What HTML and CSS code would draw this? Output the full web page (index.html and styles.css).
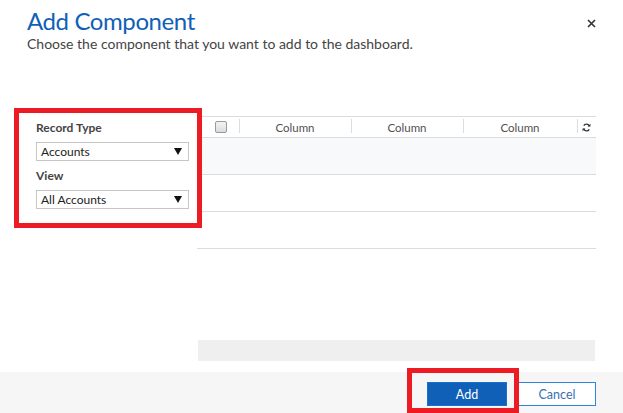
FILE: index.html
```html
<!DOCTYPE html>
<html lang="en">
<head>
<meta charset="utf-8">
<title>Add Component</title>
<link rel="stylesheet" href="styles.css">
</head>
<body>
<div class="dialog">
  <header class="head">
    <div class="titles">
      <h1 class="title">Add Component</h1>
      <p class="subtitle">Choose the component that you want to add to the dashboard.</p>
    </div>
    <button class="close" aria-label="Close">
      <svg width="9" height="9" viewBox="0 0 9 9"><path d="M1 1L8 8M8 1L1 8" stroke="#333" stroke-width="1.6" fill="none"/></svg>
    </button>
  </header>

  <main class="content">
    <section class="filters">
      <div class="label">Record Type</div>
      <div class="select"><span>Accounts</span><svg class="caret" width="8" height="7" viewBox="0 0 8 7"><path d="M0 0H8L4 7Z" fill="#111"/></svg></div>
      <div class="label label-view">View</div>
      <div class="select"><span>All Accounts</span><svg class="caret" width="8" height="7" viewBox="0 0 8 7"><path d="M0 0H8L4 7Z" fill="#111"/></svg></div>
    </section>
    <div class="annot annot-filters"></div>

    <section class="grid">
      <div class="grid-head">
        <div class="cell cell-check"><span class="checkbox"></span></div>
        <div class="cell col">Column</div>
        <div class="cell col">Column</div>
        <div class="cell col col-last">Column</div>
        <div class="cell cell-refresh">
          <svg width="9" height="9" viewBox="0 0 10 10"><path d="M8.2 3.6A3.4 3.4 0 0 0 2 3" stroke="#333" stroke-width="1.6" fill="none"/><path d="M6.2 3.9H9.4V0.7Z" fill="#333"/><path d="M1.8 6.4A3.4 3.4 0 0 0 8 7" stroke="#333" stroke-width="1.6" fill="none"/><path d="M3.8 6.1H0.6V9.3Z" fill="#333"/></svg>
        </div>
      </div>
      <div class="row row-alt"></div>
      <div class="row"></div>
      <div class="row"></div>
      <div class="grid-fill"></div>
      <div class="hscroll"></div>
    </section>
  </main>

  <footer class="foot">
    <button class="btn btn-primary">Add</button>
    <button class="btn btn-secondary">Cancel</button>
    <div class="annot annot-add"></div>
  </footer>
</div>
</body>
</html>
```

FILE: styles.css
```css
* { box-sizing: border-box; }

html, body {
  margin: 0;
  padding: 0;
  background: #fff;
}

body {
  font-family: Lato, "Open Sans", "Liberation Sans", sans-serif;
  color: #444;
}

.dialog {
  width: 623px;
  height: 413px;
  display: flex;
  flex-direction: column;
  overflow: hidden;
}

.head {
  height: 60px;
  display: flex;
  justify-content: space-between;
  align-items: flex-start;
  padding: 0 27px 0 27px;
}

.title {
  margin: 6px 0 0;
  font-size: 24px;
  font-weight: 400;
  line-height: 30px;
  color: #1160b7;
  letter-spacing: -0.4px;
}

.subtitle {
  margin: -1px 0 0;
  font-size: 14px;
  line-height: 17px;
  color: #444;
}

.close {
  margin-top: 19px;
  padding: 0;
  border: 0;
  background: none;
  width: 9px;
  height: 9px;
  display: flex;
}

.content {
  position: relative;
  flex: 1;
  display: flex;
  align-items: flex-start;
  padding: 56px 27px 0 36px;
}

.filters {
  width: 153px;
  display: flex;
  flex-direction: column;
  padding-top: 4px;
}

.label {
  font-size: 12px;
  font-weight: 700;
  line-height: 16px;
  color: #444;
}

.label-view { margin-top: 7px; }

.select {
  margin-top: 6px;
  height: 19px;
  border: 1px solid #c6c6c6;
  display: flex;
  align-items: center;
  justify-content: space-between;
  padding: 0 6px 0 4px;
  font-size: 12px;
  color: #222;
  background: #fff;
}

.caret { display: block; }

.annot {
  position: absolute;
  border: 5px solid #ed1c24;
  pointer-events: none;
}

.annot-filters {
  left: 14px;
  top: 48px;
  width: 188px;
  height: 120px;
}

.grid {
  margin-left: 8px;
  width: 399px;
  display: flex;
  flex-direction: column;
}

.grid-head {
  display: flex;
  height: 22px;
  border-top: 1px solid #dcdcdc;
  border-bottom: 1px solid #dcdcdc;
}

.cell {
  display: flex;
  align-items: center;
  justify-content: center;
  font-size: 11.5px;
  color: #505050;
}

.cell-check {
  width: 42px;
  padding-left: 18px;
  justify-content: flex-start;
}

.checkbox {
  width: 12px;
  height: 12px;
  border: 1px solid #9a9a9a;
  border-radius: 2px;
  background: linear-gradient(#f4f4f4, #dcdcdc);
}

.col {
  width: 112px;
  position: relative;
}

.col::before {
  content: "";
  position: absolute;
  left: 0;
  top: 2px;
  height: 14px;
  border-left: 1px solid #dcdcdc;
}

.col-last { width: 114px; }

.cell-refresh {
  width: 19px;
  position: relative;
  padding-left: 5px;
  justify-content: flex-start;
}

.cell-refresh::before {
  content: "";
  position: absolute;
  left: 0;
  top: 2px;
  height: 14px;
  border-left: 1px solid #dcdcdc;
}

.row {
  height: 37px;
  border-bottom: 1px solid #dcdcdc;
}

.row-alt { background: #f8f9fa; }

.grid-fill { height: 91px; }

.hscroll {
  height: 21px;
  margin: 0 1px;
  background: #efefef;
}

.foot {
  position: relative;
  height: 41px;
  flex: none;
  background: #f6f6f6;
  display: flex;
  justify-content: flex-end;
  align-items: flex-start;
  gap: 11px;
  padding: 10px 27px 0 0;
}

.btn {
  height: 24px;
  font-family: inherit;
  font-size: 12.5px;
  padding: 0;
  cursor: pointer;
}

.btn-primary {
  width: 80px;
  background: #1160b7;
  color: #fff;
  border: 1px solid #1a6fd0;
}

.btn-secondary {
  width: 78px;
  background: #fff;
  color: #3b6fb6;
  border: 1px solid #2b88d8;
}

.annot-add {
  left: 407px;
  top: -4px;
  width: 112px;
  height: 45px;
}
```
